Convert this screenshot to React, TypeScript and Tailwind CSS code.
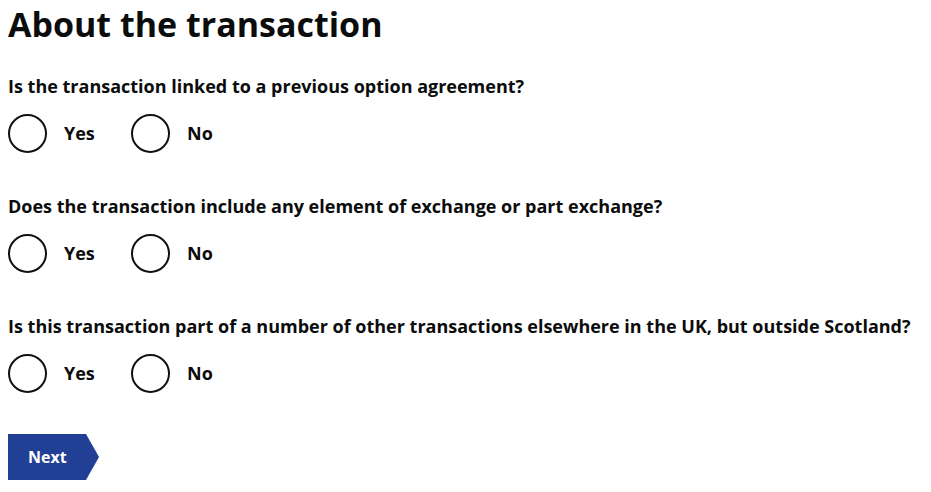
const questions = [
  'Is the transaction linked to a previous option agreement?',
  'Does the transaction include any element of exchange or part exchange?',
  'Is this transaction part of a number of other transactions elsewhere in the UK, but outside Scotland?',
];

function Radio({ label }: { label: string }) {
  return (
    <label className="flex items-center gap-[17px] w-[123px]">
      <span className="block w-[39px] h-[39px] rounded-full border-2 border-[#111]" />
      <span className="text-[18px] font-bold">{label}</span>
    </label>
  );
}

export default function App() {
  return (
    <div className="px-2 pt-[2px] text-[#0b0c0c] bg-white min-h-[492px] font-['Open_Sans','Liberation_Sans',sans-serif]">
      <h1 className="text-[34px] font-bold leading-[44px] mb-[28px]">About the transaction</h1>
      {questions.map((q) => (
        <div key={q} className="mb-[41px]">
          <p className="text-[18px] font-bold leading-[24px] mb-[16px]">{q}</p>
          <div className="flex">
            <Radio label="Yes" />
            <Radio label="No" />
          </div>
        </div>
      ))}
      <button
        className="h-[46px] w-[91px] bg-[#213f94] text-white font-bold text-[16px] pl-[20px] text-left [clip-path:polygon(0_0,78px_0,91px_50%,78px_100%,0_100%)]"
      >
        Next
      </button>
    </div>
  );
}
